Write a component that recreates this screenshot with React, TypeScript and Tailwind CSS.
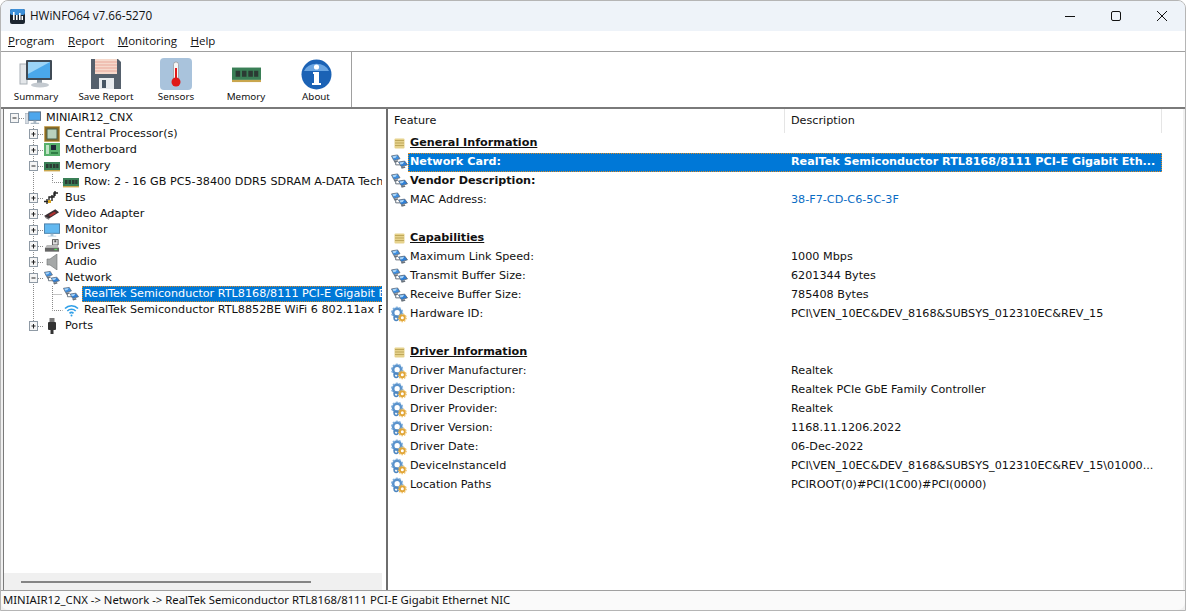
import React from "react";

const Lan = () => (
  <svg width="18" height="17" viewBox="0 0 18 17">
    <path d="M5 8v3h6" fill="none" stroke="#5f6b78" strokeWidth="1" />
    <path d="M0.5 1.5L7 0.5 9.5 4.5 3 6.5z" fill="#3f8fe0" stroke="#5b6673" strokeWidth=".8" />
    <path d="M1.5 2L6.5 1.2 5 3.5 2.5 4z" fill="#a8d4f7" />
    <path d="M3 7l4-1 .8 1.5-4 1.2z" fill="#69727c" />
    <path d="M8 8l6.5-1 3 4-6.5 2z" fill="#2f7fd6" stroke="#5b6673" strokeWidth=".8" />
    <path d="M9 8.5l5-.8-1.5 2.3-2.5.5z" fill="#a8d4f7" />
    <path d="M10.5 13.5l4-1 .8 1.5-4 1.2z" fill="#69727c" />
  </svg>
);

const Gears = () => (
  <svg width="18" height="18" viewBox="0 0 18 18">
    <circle cx="6.5" cy="6.5" r="4.2" fill="none" stroke="#5b93cc" strokeWidth="2.8" />
    <circle cx="6.5" cy="6.5" r="5.8" fill="none" stroke="#7fb0de" strokeWidth="1.4" strokeDasharray="2 1.6" />
    <circle cx="5.5" cy="12.5" r="2.2" fill="none" stroke="#4d86c0" strokeWidth="1.6" />
    <circle cx="12" cy="12" r="2.6" fill="#fff" stroke="#e0a63a" strokeWidth="2" />
    <circle cx="12" cy="12" r="4.1" fill="none" stroke="#eeb850" strokeWidth="1.2" strokeDasharray="1.6 1.2" />
  </svg>
);

const Section = () => (
  <svg width="12" height="11" viewBox="0 0 12 11">
    <rect x="0.5" y="0.5" width="10" height="10" rx="1" fill="#e6d28c" />
    <path d="M1 2.5h9M1 5h9M1 7.5h9" stroke="#bfa85a" strokeWidth="1" />
  </svg>
);

const Ram = ({ w = 16, h = 11 }: { w?: number; h?: number }) => (
  <svg width={w} height={h} viewBox="0 0 16 11" preserveAspectRatio="none">
    <rect y="1" width="16" height="8" fill="#3a7f56" />
    <path d="M2 3h2.5v4H2zM5.5 3H8v4H5.5zM9 3h2.5v4H9zM12.2 3h2.3v4h-2.3z" fill="#2b3a33" />
    <rect y="9" width="16" height="1.4" fill="#c9a64d" />
  </svg>
);

const Cpu = () => (
  <svg width="16" height="16" viewBox="0 0 16 16">
    <rect x="0.5" y="0.5" width="15" height="15" fill="#8a6a24" />
    <rect x="0.5" y="0.5" width="15" height="15" fill="none" stroke="#c89a35" strokeDasharray="1 1" />
    <rect x="3" y="3" width="10" height="10" fill="#b9d2bc" stroke="#47614d" />
  </svg>
);

const Board = () => (
  <svg width="16" height="14" viewBox="0 0 16 14">
    <rect width="16" height="13" fill="#58b06c" />
    <rect x="7" y="2" width="5" height="5" fill="#1f2937" />
    <rect x="2" y="2" width="3" height="9" fill="#bfe3c4" />
    <rect x="7" y="9" width="7" height="2" fill="#2f7d45" />
  </svg>
);

const Bus = () => (
  <svg width="16" height="16" viewBox="0 0 16 16">
    <path d="M0 11.5h5V7h5V3h4M11 1v5M3 9v5M8 5v6" fill="none" stroke="#222" strokeWidth="1.4" />
    <rect x="4" y="10" width="3" height="3" fill="#d9a520" />
  </svg>
);

const Gpu = () => (
  <svg width="17" height="13" viewBox="0 0 17 13">
    <path d="M0 8L12 1l4 3L5 11z" fill="#3b2f33" />
    <path d="M5 7l6-3.5 2 1.5-6 3.5z" fill="#b03030" />
    <path d="M1 10l4 2 1-1-4-2z" fill="#777" />
  </svg>
);

const MonitorSmall = () => (
  <svg width="17" height="15" viewBox="0 0 17 15">
    <rect x="0.5" y="0.5" width="16" height="10" fill="#62b8f0" stroke="#4a7fa8" />
    <path d="M7 11h3v2H7zM4 13h9v1H4z" fill="#a8c4d8" />
  </svg>
);

const Drive = () => (
  <svg width="17" height="14" viewBox="0 0 17 14">
    <path d="M9 0h6v6H9z" fill="#ddd" stroke="#555" />
    <path d="M11 1h2v2h-2z" fill="#555" />
    <path d="M3 6h11l2 3H1z" fill="#bbb" />
    <rect x="1" y="9" width="15" height="4" fill="#666" />
    <rect x="11" y="10" width="3" height="1.4" fill="#5be05b" />
  </svg>
);

const Speaker = () => (
  <svg width="13" height="16" viewBox="0 0 13 16">
    <path d="M1 5h3l7-5v16l-7-5H1z" fill="#a5a8a8" stroke="#6b6f6f" strokeWidth=".6" />
  </svg>
);

const Wifi = () => (
  <svg width="15" height="13" viewBox="0 0 15 13" fill="none" stroke="#2f9fe8" strokeWidth="1.6">
    <path d="M1 4.5a9 9 0 0 1 13 0M3.3 7a6 6 0 0 1 8.4 0M5.5 9.3a3 3 0 0 1 4 0" />
    <circle cx="7.5" cy="11.5" r="1" fill="#2f9fe8" stroke="none" />
  </svg>
);

const Usb = () => (
  <svg width="10" height="16" viewBox="0 0 10 16">
    <rect x="2.5" y="0" width="5" height="5" fill="#777" />
    <rect x="1" y="4" width="8" height="8" rx="1" fill="#333" />
    <rect x="3.5" y="12" width="3" height="4" fill="#333" />
  </svg>
);

const Computer = () => (
  <svg width="17" height="14" viewBox="0 0 17 14">
    <rect x="0" y="2" width="4" height="11" fill="#d5dbe2" stroke="#9aa5b1" strokeWidth=".6" />
    <rect x="4" y="0.5" width="12.5" height="9" fill="#4da6ec" stroke="#5a6f85" />
    <path d="M9 10h3v2H9zM6 12h9v1.4H6z" fill="#aab8c4" />
  </svg>
);

// tree expander box with its dotted stubs, x is the box centre
const Guides = ({ kind }: { kind: string }) => {
  const dot = { stroke: "#8a8a8a", strokeDasharray: "1 1", fill: "none" };
  const box = (x: number, open: boolean) => (
    <>
      <rect x={x - 4} y="3.5" width="8" height="9" fill="#f5f5f5" stroke="#8f9aa5" />
      <path d={open ? `M${x - 2} 8h4` : `M${x - 2} 8h4M${x} 6v4.5`} stroke="#222" />
    </>
  );
  if (kind === "root")
    return (
      <svg width="21" height="16" className="shrink-0">
        <path d="M15 8.5h6" {...dot} />
        {box(10.5, true)}
      </svg>
    );
  if (kind === "leaf" || kind === "leafEnd")
    return (
      <svg width="59" height="16" className="shrink-0">
        <path d="M29.5 0v16" {...dot} />
        <path d={kind === "leaf" ? "M48.5 0v16M48.5 8.5h10" : "M48.5 0v8.5h10"} {...dot} />
      </svg>
    );
  return (
    <svg width="40" height="16" className="shrink-0">
      <path d={kind === "last" ? "M29.5 0v3" : "M29.5 0v16"} {...dot} />
      <path d="M34 8.5h6" {...dot} />
      {box(29.5, kind === "open")}
    </svg>
  );
};

const Tree = ({ kind, icon, label, selected }: { kind: string; icon: React.ReactNode; label: string; selected?: boolean }) => (
  <div className="flex h-4 items-center whitespace-nowrap">
    <Guides kind={kind} />
    <span className="flex w-[19px] shrink-0 items-center justify-center pr-[3px]">{icon}</span>
    {selected ? (
      <span className="h-[16px] flex-1 border border-dotted border-[#e08a20] bg-[#0078d7] pl-[1px] leading-[14px] text-white">{label}</span>
    ) : (
      <span className="pl-[2px]">{label}</span>
    )}
  </div>
);

type Row = { icon?: "lan" | "gear" | "sec"; name?: string; value?: string; kind?: "head" | "sel" | "bold" | "link" };

const rows: Row[] = [
  { icon: "sec", name: "General Information", kind: "head" },
  { icon: "lan", name: "Network Card:", value: "RealTek Semiconductor RTL8168/8111 PCI-E Gigabit Eth...", kind: "sel" },
  { icon: "lan", name: "Vendor Description:", kind: "bold" },
  { icon: "lan", name: "MAC Address:", value: "38-F7-CD-C6-5C-3F", kind: "link" },
  {},
  { icon: "sec", name: "Capabilities", kind: "head" },
  { icon: "lan", name: "Maximum Link Speed:", value: "1000 Mbps" },
  { icon: "lan", name: "Transmit Buffer Size:", value: "6201344 Bytes" },
  { icon: "lan", name: "Receive Buffer Size:", value: "785408 Bytes" },
  { icon: "gear", name: "Hardware ID:", value: "PCI\\VEN_10EC&DEV_8168&SUBSYS_012310EC&REV_15" },
  {},
  { icon: "sec", name: "Driver Information", kind: "head" },
  { icon: "gear", name: "Driver Manufacturer:", value: "Realtek" },
  { icon: "gear", name: "Driver Description:", value: "Realtek PCIe GbE Family Controller" },
  { icon: "gear", name: "Driver Provider:", value: "Realtek" },
  { icon: "gear", name: "Driver Version:", value: "1168.11.1206.2022" },
  { icon: "gear", name: "Driver Date:", value: "06-Dec-2022" },
  { icon: "gear", name: "DeviceInstanceId", value: "PCI\\VEN_10EC&DEV_8168&SUBSYS_012310EC&REV_15\\01000..." },
  { icon: "gear", name: "Location Paths", value: "PCIROOT(0)#PCI(1C00)#PCI(0000)" },
];

const ToolBtn = ({ label, children }: { label: string; children: React.ReactNode }) => (
  <div className="flex w-[70px] flex-col items-center">
    <div className="flex h-[36px] items-center justify-center">{children}</div>
    <div className="mt-[-2px] text-[9.8px] leading-[14px]">{label}</div>
  </div>
);

export default function App() {
  return (
    <div className="flex h-[611px] w-[1186px] flex-col overflow-hidden rounded-t-lg border border-[#b5b5b5] bg-[#f0f0f0] font-['Noto_Sans',sans-serif] text-[12px] text-[#111]">
      {/* title bar */}
      <div className="flex h-[30px] shrink-0 items-center bg-[#eef3f9] pl-[9px]">
        <svg width="15" height="15" viewBox="0 0 15 15">
          <rect width="15" height="15" rx="2" fill="#1c2530" />
          <rect y="0" width="15" height="6" rx="2" fill="#3d8fd8" />
          <path d="M3 3h1.6v8H3zM6 6h1.6v5H6zM9 4h1.6v7H9zM11.5 7H13v4h-1.5z" fill="#fff" />
        </svg>
        <span className="ml-[5px] font-['Open_Sans',sans-serif] text-[11.7px]">HWiNFO64 v7.66-5270</span>
        <div className="ml-auto flex items-center">
          <svg width="46" height="30" viewBox="0 0 46 30"><path d="M18 15.5h10" stroke="#111" /></svg>
          <svg width="46" height="30" viewBox="0 0 46 30"><rect x="18.5" y="10.5" width="9" height="9" rx="1.5" fill="none" stroke="#111" /></svg>
          <svg width="46" height="30" viewBox="0 0 46 30"><path d="M18 10l10 10M28 10L18 20" stroke="#111" /></svg>
        </div>
      </div>

      {/* menu */}
      <div className="flex h-[21px] shrink-0 items-center gap-[13.5px] border-b border-[#a0a0a0] bg-white pl-[7px] font-['Open_Sans',sans-serif] text-[11.5px]">
        <span><u>P</u>rogram</span>
        <span><u>R</u>eport</span>
        <span><u>M</u>onitoring</span>
        <span><u>H</u>elp</span>
      </div>

      {/* toolbar */}
      <div className="flex h-[57px] shrink-0 border-b-2 border-[#7a7a7a] bg-white">
        <div className="flex w-[351px] items-start border-r border-[#a0a0a0] pt-[4px]">
          <ToolBtn label="Summary">
            <svg width="34" height="30" viewBox="0 0 34 30">
              <rect x="1" y="5" width="7" height="20" fill="#e4e7ea" stroke="#a9b0b6" />
              <rect x="7" y="1" width="26" height="20" rx="1" fill="#3f4a55" />
              <path d="M9 3h22v16H9z" fill="#4aa8ea" />
              <path d="M9 3h22L9 15z" fill="#9bd4f7" />
              <path d="M18 21h5v3h-5z" fill="#98a2ab" />
              <ellipse cx="21" cy="26" rx="9" ry="2.5" fill="#c4cad0" />
            </svg>
          </ToolBtn>
          <ToolBtn label="Save Report">
            <svg width="32" height="32" viewBox="0 0 32 32">
              <path d="M1 1h27l3 3v27H1z" fill="#55606c" />
              <rect x="5" y="1" width="22" height="15" fill="#f6d9cc" />
              <path d="M5 4h22M5 7h22M5 10h22M5 13h22" stroke="#e9a89a" />
              <rect x="9" y="20" width="15" height="11" fill="#e8ebee" />
              <rect x="12" y="22" width="4" height="8" fill="#475563" />
            </svg>
          </ToolBtn>
          <ToolBtn label="Sensors">
            <svg width="32" height="32" viewBox="0 0 32 32">
              <rect width="32" height="32" rx="4" fill="#a9c3dc" />
              <rect x="13.5" y="4" width="5" height="20" rx="2.5" fill="#f5f5f5" stroke="#888" strokeWidth=".6" />
              <rect x="15" y="10" width="2" height="12" fill="#e01818" />
              <circle cx="16" cy="24" r="4.5" fill="#e01818" />
            </svg>
          </ToolBtn>
          <ToolBtn label="Memory">
            <Ram w={29} h={17} />
          </ToolBtn>
          <ToolBtn label="About">
            <svg width="31" height="31" viewBox="0 0 31 31">
              <circle cx="15.5" cy="15.5" r="15" fill="#1b62b5" />
              <path d="M3 12a13 10 0 0 1 25 0z" fill="#6aa5e2" />
              <circle cx="15.5" cy="8" r="2.6" fill="#fff" />
              <path d="M12 13h6v11h2v2h-9v-2h2v-9h-1z" fill="#fff" />
            </svg>
          </ToolBtn>
        </div>
      </div>

      {/* panes */}
      <div className="flex min-h-0 flex-1 pl-[2px] pr-[2px] font-['DejaVu_Sans',sans-serif] text-[11.2px]">
        <div className="flex w-[379px] shrink-0 flex-col border-l border-[#7a7a7a] bg-white">
          <div className="min-h-0 flex-1 overflow-hidden pt-[1px] leading-4">
            <Tree kind="root" icon={<Computer />} label="MINIAIR12_CNX" />
            <Tree kind="closed" icon={<Cpu />} label="Central Processor(s)" />
            <Tree kind="closed" icon={<Board />} label="Motherboard" />
            <Tree kind="open" icon={<Ram />} label="Memory" />
            <Tree kind="leafEnd" icon={<Ram />} label="Row: 2 - 16 GB PC5-38400 DDR5 SDRAM A-DATA Technology" />
            <Tree kind="closed" icon={<Bus />} label="Bus" />
            <Tree kind="closed" icon={<Gpu />} label="Video Adapter" />
            <Tree kind="closed" icon={<MonitorSmall />} label="Monitor" />
            <Tree kind="closed" icon={<Drive />} label="Drives" />
            <Tree kind="closed" icon={<Speaker />} label="Audio" />
            <Tree kind="open" icon={<Lan />} label="Network" />
            <Tree kind="leaf" icon={<Lan />} label="RealTek Semiconductor RTL8168/8111 PCI-E Gigabit Ethernet NIC" selected />
            <Tree kind="leafEnd" icon={<Wifi />} label="RealTek Semiconductor RTL8852BE WiFi 6 802.11ax PCIe Adapter" />
            <Tree kind="last" icon={<Usb />} label="Ports" />
          </div>
          <div className="flex h-[17px] shrink-0 items-center bg-[#f0f0f0] pl-[17px]">
            <div className="h-[2px] w-[290px] bg-[#858585]" />
          </div>
        </div>
        <div className="w-[4px] shrink-0 bg-white" />
        <div className="min-w-0 flex-1 border-l-2 border-[#6e6e6e] bg-white">
          <div className="mb-[1px] flex h-[24px] items-center">
            <div className="h-full w-[397px] border-r border-[#e5e5e5] pt-[4px] pl-[6px]">Feature</div>
            <div className="h-full w-[377px] border-r border-[#e5e5e5] pt-[4px] pl-[6px]">Description</div>
          </div>
          {rows.map((r, i) => (
            <div key={i} className="flex h-[19px] items-center whitespace-nowrap">
              <span className="flex w-[20px] shrink-0 items-center justify-center pl-[3px]">
                {r.icon === "lan" && <Lan />}
                {r.icon === "gear" && <Gears />}
                {r.icon === "sec" && <Section />}
              </span>
              <div className={`flex h-[19px] w-[754px] items-center border border-dotted ${r.kind === "sel" ? "border-[#e08a20] bg-[#0078d7] font-bold text-white" : "border-transparent"} ${r.kind === "bold" ? "font-bold" : ""}`}>
                <span className={`w-[382px] shrink-0 pl-[1px] ${r.kind === "head" ? "font-bold underline" : ""}`}>{r.name}</span>
                <span className={r.kind === "link" ? "text-[#0a6cc4]" : ""}>{r.value}</span>
              </div>
            </div>
          ))}
        </div>
      </div>

      {/* status bar */}
      <div className="flex h-[20px] shrink-0 items-center rounded-b-lg border-t border-[#a0a0a0] bg-[#fafafa] pl-[2px] text-[11.3px]">
        MINIAIR12_CNX -&gt; Network -&gt; RealTek Semiconductor RTL8168/8111 PCI-E Gigabit Ethernet NIC
      </div>
    </div>
  );
}
